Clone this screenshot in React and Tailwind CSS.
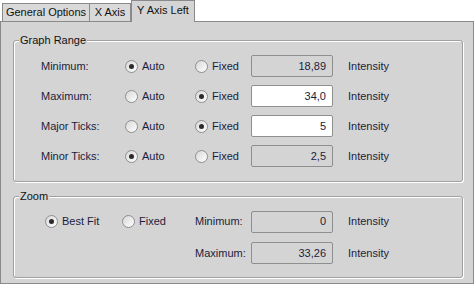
import React from "react";

const rows = [
  { label: "Minimum:", auto: true, value: "18,89" },
  { label: "Maximum:", auto: false, value: "34,0" },
  { label: "Major Ticks:", auto: false, value: "5" },
  { label: "Minor Ticks:", auto: true, value: "2,5" },
];

function Radio({ checked, label }) {
  return (
    <div className="flex items-center gap-[4px]">
      <span className="w-[13px] h-[13px] rounded-full border border-[#8e8f8f] bg-gradient-to-br from-[#d8d8d8] to-white flex items-center justify-center">
        {checked && <span className="w-[5px] h-[5px] rounded-full bg-[#2b2b2b]" />}
      </span>
      <span>{label}</span>
    </div>
  );
}

function Field({ value, enabled }) {
  return (
    <div
      className={
        "w-[82px] h-[22px] rounded-[2px] border border-[#8e8f8f] flex items-center justify-end pr-[6px] " +
        (enabled ? "bg-white" : "bg-[#d4d4d4]")
      }
    >
      {value}
    </div>
  );
}

function Group({ title, className, children }) {
  return (
    <fieldset
      className={
        "border border-[#a0a0a0] rounded-[3px] shadow-[1px_1px_0_#fff,inset_1px_1px_0_#fff] " + className
      }
    >
      <legend className="ml-[5px] px-[1px] bg-[#d4d4d4] text-[#111]">{title}</legend>
      {children}
    </fieldset>
  );
}

export default function App() {
  return (
    <div
      className="w-[475px] h-[287px] bg-white text-[11px] leading-[13px] text-[#1c1c3c]"
      style={{ fontFamily: '"Liberation Sans", Arial, sans-serif' }}
    >
      {/* tabs */}
      <div className="flex items-end h-[21px] pl-[2px] text-[#111] whitespace-nowrap">
        <div className="w-[88px] h-[18px] flex items-center justify-center border border-b-0 border-[#8a8a8a] bg-[#d9d9d9]">
          General Options
        </div>
        <div className="w-[41px] h-[18px] flex items-center justify-center border border-b-0 border-l-0 border-[#8a8a8a] bg-[#d9d9d9]">
          X Axis
        </div>
        <div className="relative z-10 w-[64px] h-[22px] mb-[-1px] pb-[3px] flex items-center justify-center border border-b-0 border-[#8a8a8a] bg-[#d4d4d4]">
          Y Axis Left
        </div>
      </div>

      {/* panel */}
      <div className="w-[474px] h-[263px] border border-[#8a8a8a] bg-[#d4d4d4] pl-[12px] pr-[10px] pt-[12px] flex flex-col gap-[8px]">
        <Group title="Graph Range" className="h-[148px]">
          <div className="pt-[8px] pl-[27px] grid grid-cols-[84px_70px_56px_97px_auto] gap-y-[8px] items-center">
            {rows.map((r) => (
              <React.Fragment key={r.label}>
                <span>{r.label}</span>
                <Radio checked={r.auto} label="Auto" />
                <Radio checked={!r.auto} label="Fixed" />
                <Field value={r.value} enabled={!r.auto} />
                <span>Intensity</span>
              </React.Fragment>
            ))}
          </div>
        </Group>

        <Group title="Zoom" className="h-[88px]">
          <div className="pt-[7px] pl-[31px] grid grid-cols-[77px_73px_56px_97px_auto] grid-rows-[23px_22px] gap-y-[9px] items-center">
            <Radio checked label="Best Fit" />
            <Radio checked={false} label="Fixed" />
            <span>Minimum:</span>
            <Field value="0" />
            <span>Intensity</span>
            <span />
            <span />
            <span>Maximum:</span>
            <Field value="33,26" />
            <span>Intensity</span>
          </div>
        </Group>
      </div>
    </div>
  );
}
